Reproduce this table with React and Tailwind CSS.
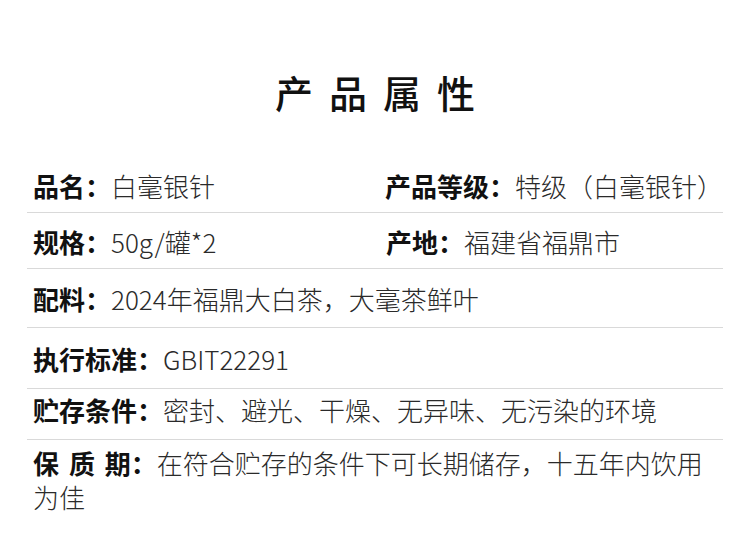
import React from "react";

const font = { fontFamily: '"Noto Sans CJK SC", "Noto Sans", sans-serif' };

function Field({ label, value, className = "" }) {
  return (
    <div className={`flex items-center whitespace-nowrap ${className}`}>
      <span className="font-bold text-[#111]">{label}</span>
      <span className="font-light text-[#2a2a2a]">{value}</span>
    </div>
  );
}

export default function App() {
  return (
    <div className="w-[750px] h-[553px] bg-white overflow-hidden" style={font}>
      <h1 className="pt-[68px] text-center text-[38px] leading-[48px] font-medium tracking-[16px] text-[#111] pl-[16px]">
        产品属性
      </h1>

      <div className="mt-[40px] px-[27px] text-[26px] leading-[32px]">
        <div className="flex pl-[6px] pt-[14px] pb-[10px] border-b border-[#d9d9d9]">
          <Field label="品名：" value="白毫银针" className="w-[353px]" />
          <Field label="产品等级：" value="特级（白毫银针）" />
        </div>
        <div className="flex pl-[6px] pt-[13px] pb-[10px] border-b border-[#d9d9d9]">
          <Field label="规格：" value="50g/罐*2" className="w-[353px]" />
          <Field label="产地：" value="福建省福鼎市" />
        </div>
        <div className="flex pl-[6px] pt-[14px] pb-[12px] border-b border-[#d9d9d9]">
          <Field label="配料：" value="2024年福鼎大白茶，大毫茶鲜叶" />
        </div>
        <div className="flex pl-[6px] pt-[15px] pb-[13px] border-b border-[#d9d9d9]">
          <Field label="执行标准：" value="GBIT22291" />
        </div>
        <div className="flex pl-[6px] pt-[5px] pb-[13px] border-b border-[#d9d9d9]">
          <Field label="贮存条件：" value="密封、避光、干燥、无异味、无污染的环境" />
        </div>
        <p className="pl-[6px] pt-[6px] leading-[34px] font-light text-[#2a2a2a] pr-[8px]">
          <span className="font-bold text-[#111] [word-spacing:4px]">保 质 期：</span>
          在符合贮存的条件下可长期储存，十五年内饮用为佳
        </p>
      </div>
    </div>
  );
}
